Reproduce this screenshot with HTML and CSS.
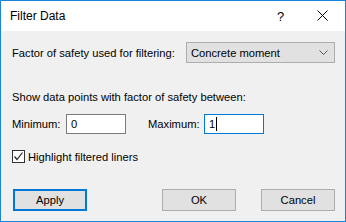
FILE: index.html
```html
<!DOCTYPE html>
<html lang="en">
<head>
    <meta charset="UTF-8">
    <title>Filter Data</title>
    <link rel="stylesheet" href="styles.css">
</head>
<body>
    <div class="dialog">
        <div class="titlebar">
            <span class="title">Filter Data</span>
            <span class="help">?</span>
            <span class="close">
                <svg width="11" height="11" viewBox="0 0 11 11"><path d="M0.5 0.5 L10.5 10.5 M10.5 0.5 L0.5 10.5" stroke="#000" stroke-width="1" fill="none"/></svg>
            </span>
        </div>

        <div class="body">
            <div class="row factor">
                <label class="factor-label">Factor of safety used for filtering:</label>
                <div class="combo">
                    <span>Concrete moment</span>
                    <svg width="9" height="5" viewBox="0 0 9 5"><path d="M0.5 0.5 L4.5 4.5 L8.5 0.5" stroke="#555" stroke-width="1" fill="none"/></svg>
                </div>
            </div>

            <div class="section-label">Show data points with factor of safety between:</div>

            <div class="row range">
                <label class="min-label">Minimum:</label>
                <div class="field">0</div>
                <label class="max-label">Maximum:</label>
                <div class="field focused">1<span class="caret"></span></div>
            </div>

            <label class="check">
                <span class="box">
                    <svg width="11" height="11" viewBox="0 0 11 11"><path d="M1.5 5.5 L4 8.5 L9.5 1.5" stroke="#222" stroke-width="1.2" fill="none"/></svg>
                </span>
                Highlight filtered liners
            </label>

            <div class="buttons">
                <button class="btn default">Apply</button>
                <span class="spacer"></span>
                <button class="btn">OK</button>
                <button class="btn">Cancel</button>
            </div>
        </div>
    </div>
</body>
</html>
```

FILE: styles.css
```css
body {
    margin: 0;
    font-family: "Liberation Sans", Arial, sans-serif;
    font-size: 11.2px;
    color: #000;
}

.dialog {
    width: 344px;
    height: 220px;
    border: 1px solid #1883d7;
    background: #f0f0f0;
    display: flex;
    flex-direction: column;
}

.titlebar {
    height: 30px;
    background: white;
    display: flex;
    align-items: center;
    padding-left: 9px;
}

.title {
    flex: 1;
    font-size: 12px;
    margin-top: -1px;
}

.help {
    width: 7px;
    margin-right: 33px;
    font-size: 13px;
}

.close {
    width: 11px;
    height: 11px;
    margin-right: 17px;
    margin-top: -2px;
    display: flex;
}

.body {
    padding: 0 10px 0 11px;
    display: flex;
    flex-direction: column;
}

.row {
    display: flex;
    align-items: center;
}

.row label {
    flex-shrink: 0;
    white-space: nowrap;
}

.factor {
    margin-top: 11px;
    height: 21px;
}

.factor-label {
    flex: 1;
}

.combo {
    flex-shrink: 0;
    width: 137px;
    height: 19px;
    border: 1px solid #adadad;
    background: #e1e1e1;
    display: flex;
    align-items: center;
    justify-content: space-between;
    padding: 0 6px 0 4px;
}

.section-label {
    margin-top: 27px;
    line-height: 15px;
}

.range {
    margin-top: 9px;
    height: 20px;
}

.min-label {
    width: 54px;
}

.max-label {
    width: 56px;
}

.field {
    flex-shrink: 0;
    width: 54px;
    height: 18px;
    border: 1px solid #7a7a7a;
    background: white;
    padding-left: 4px;
    margin-right: 22px;
    display: flex;
    align-items: center;
}

.field.focused {
    border-color: #0078d7;
    margin-right: 0;
}

.caret {
    display: inline-block;
    width: 1px;
    height: 14px;
    background: #000;
    margin-left: 1px;
}

.check {
    margin-top: 15px;
    display: flex;
    align-items: center;
    height: 15px;
}

.box {
    width: 11px;
    height: 11px;
    border: 1px solid #333;
    background: white;
    margin-right: 3px;
    display: flex;
}

.buttons {
    margin-top: 25px;
    display: flex;
    padding-left: 1px;
}

.spacer {
    flex: 1;
}

.btn {
    width: 74px;
    height: 22px;
    background: #e1e1e1;
    border: 1px solid #adadad;
    font-family: inherit;
    font-size: 11.2px;
    color: #000;
    padding: 0;
    margin-left: 25px;
}

.btn.default {
    border: 2px solid #0078d7;
    margin-left: 0;
}
```
